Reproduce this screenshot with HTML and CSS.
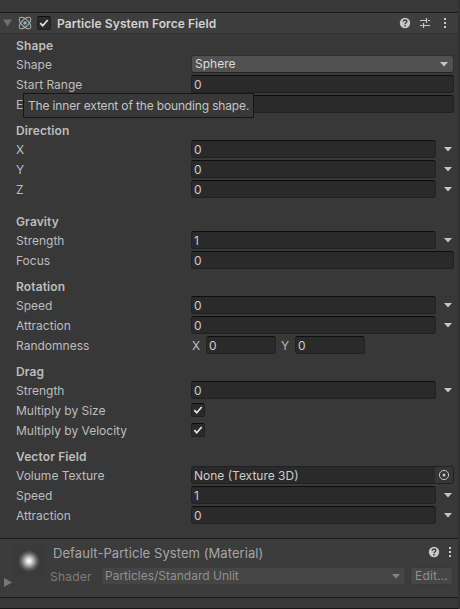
FILE: index.html
```html
<!DOCTYPE html>
<html lang="en">
<head>
<meta charset="utf-8">
<title>Inspector</title>
<link rel="stylesheet" href="styles.css">
</head>
<body>
<svg class="defs" width="0" height="0">
  <symbol id="check" viewBox="0 0 14 14"><path d="M3.3 7.2 5.7 9.7 10.7 4" fill="none" stroke="#e4e4e4" stroke-width="1.7"/></symbol>
  <symbol id="down" viewBox="0 0 8 5"><path d="M0 0H8L4 4.6Z" fill="currentColor"/></symbol>
  <symbol id="help" viewBox="0 0 12 12"><circle cx="6" cy="6" r="5.2" fill="#c8c8c8"/><path d="M4.2 4.7C4.2 2.4 7.8 2.4 7.8 4.6 7.8 5.8 6 5.7 6 7.2M6 8.1V9.5" fill="none" stroke="#3c3c3c" stroke-width="1.4"/></symbol>
  <symbol id="dots" viewBox="0 0 4 12"><path d="M1 1h2v2H1zM1 5h2v2H1zM1 9h2v2H1z" fill="#c8c8c8"/></symbol>
</svg>
<div class="inspector">
  <div class="top"></div>
  <header class="head">
    <svg class="fold" viewBox="0 0 10 8"><path d="M0 0H10L5 8Z" fill="#707070"/></svg>
    <svg class="atom" viewBox="0 0 14 14"><g fill="none" stroke="#b5b5b5" stroke-width="1"><ellipse cx="7" cy="7" rx="7.4" ry="3.5" transform="rotate(45 7 7)"/><ellipse cx="7" cy="7" rx="7.4" ry="3.5" transform="rotate(-45 7 7)"/></g><circle cx="7" cy="7" r="1.8" fill="#62c3ee"/></svg>
    <span class="check"><svg><use href="#check"/></svg></span>
    <h1>Particle System Force Field</h1>
    <svg class="help"><use href="#help"/></svg>
    <svg class="preset" viewBox="0 0 12 12"><path d="M1 3.5H7M9 3.5H11M7.5 1V6M1 8.5H3.5M5 8.5H11M4.5 6V11" fill="none" stroke="#c8c8c8" stroke-width="1.2"/></svg>
    <svg class="dots"><use href="#dots"/></svg>
  </header>
  <main class="body">
    <section>
      <h2>Shape</h2>
      <div class="row"><label>Shape</label><div class="select">Sphere<svg class="down"><use href="#down"/></svg></div></div>
      <div class="row"><label>Start Range</label><div class="field">0</div></div>
      <div class="row"><label>End Range</label><div class="field"></div><div class="tooltip">The inner extent of the bounding shape.</div></div>
    </section>
    <section>
      <h2>Direction</h2>
      <div class="row"><label>X</label><div class="field">0</div><svg class="down curve"><use href="#down"/></svg></div>
      <div class="row"><label>Y</label><div class="field">0</div><svg class="down curve"><use href="#down"/></svg></div>
      <div class="row"><label>Z</label><div class="field">0</div><svg class="down curve"><use href="#down"/></svg></div>
    </section>
    <section class="spaced">
      <h2>Gravity</h2>
      <div class="row"><label>Strength</label><div class="field">1</div><svg class="down curve"><use href="#down"/></svg></div>
      <div class="row"><label>Focus</label><div class="field">0</div></div>
    </section>
    <section>
      <h2>Rotation</h2>
      <div class="row"><label>Speed</label><div class="field">0</div><svg class="down curve"><use href="#down"/></svg></div>
      <div class="row"><label>Attraction</label><div class="field">0</div><svg class="down curve"><use href="#down"/></svg></div>
      <div class="row"><label>Randomness</label><span class="axis">X</span><div class="field small">0</div><span class="axis second">Y</span><div class="field small">0</div></div>
    </section>
    <section>
      <h2>Drag</h2>
      <div class="row"><label>Strength</label><div class="field">0</div><svg class="down curve"><use href="#down"/></svg></div>
      <div class="row"><label>Multiply by Size</label><span class="check"><svg><use href="#check"/></svg></span></div>
      <div class="row"><label>Multiply by Velocity</label><span class="check"><svg><use href="#check"/></svg></span></div>
    </section>
    <section>
      <h2>Vector Field</h2>
      <div class="row"><label>Volume Texture</label><div class="field object">None (Texture 3D)<span class="pick"><svg viewBox="0 0 12 12"><circle cx="6" cy="6" r="4.6" fill="none" stroke="#c4c4c4"/><circle cx="6" cy="6" r="1.5" fill="#c4c4c4"/></svg></span></div></div>
      <div class="row"><label>Speed</label><div class="field">1</div><svg class="down curve"><use href="#down"/></svg></div>
      <div class="row"><label>Attraction</label><div class="field">0</div><svg class="down curve"><use href="#down"/></svg></div>
    </section>
  </main>
  <footer class="material">
    <svg class="expand" viewBox="0 0 8 9"><path d="M0 0 8 4.5 0 9Z" fill="#777"/></svg>
    <div class="preview"></div>
    <div class="info">
      <div class="title"><h3>Default-Particle System (Material)</h3><svg class="help"><use href="#help"/></svg><svg class="dots"><use href="#dots"/></svg></div>
      <div class="shader"><span class="name">Shader</span><div class="select dim">Particles/Standard Unlit<svg class="down"><use href="#down"/></svg></div><div class="edit">Edit...</div></div>
    </div>
  </footer>
  <div class="bottom"></div>
</div>
</body>
</html>
```

FILE: styles.css
```css
* { box-sizing: border-box; }
body { margin: 0; background: #313131; }
.defs { position: absolute; }
svg { display: block; flex: none; }
h1, h2, h3 { margin: 0; }
.inspector {
  width: 458px;
  height: 609px;
  background: #383838;
  color: #bdbdbd;
  font: 12px/18px Inter, "Liberation Sans", sans-serif;
  white-space: nowrap;
  display: flex;
  flex-direction: column;
}
.top { height: 13px; border-bottom: 1px solid #1a1a1a; }
.head {
  height: 21px;
  background: #3e3e3e;
  border-bottom: 1px solid #303030;
  display: flex;
  align-items: center;
  padding-left: 3px;
}
.fold { width: 9px; height: 8px; }
.atom { width: 14px; height: 14px; margin: 0 5px 0 6px; overflow: visible; }
.head h1 { font-size: 12px; font-weight: 600; letter-spacing: 0.08px; color: #d2d2d2; margin: 2px 0 0 6px; flex: 1; }
.help { width: 12px; height: 12px; }
.preset { width: 12px; height: 12px; margin-left: 8px; }
.dots { width: 4px; height: 12px; }
.head .dots { margin: 0 11px 0 12px; }
.check {
  width: 14px;
  height: 14px;
  background: #2a2a2a;
  border: 1px solid #212121;
  border-top-color: #0d0d0d;
  border-radius: 2px;
}
.check svg { width: 14px; height: 14px; margin: -1px; }
.body { height: 504px; padding: 3px 4px 0 16px; }
section + section { margin-top: 9px; }
section.spaced { margin-top: 15px; }
h2 { font-size: 12px; line-height: 18px; font-weight: 600; letter-spacing: 0.12px; }
.row { display: flex; align-items: center; height: 18px; position: relative; }
.row + .row { margin-top: 2px; }
.row label { width: 175px; height: 18px; line-height: 20px; flex: none; }
.field {
  flex: 1;
  height: 18px;
  line-height: 17px;
  padding-left: 2px;
  background: #2a2a2a;
  border: 1px solid #212121;
  border-top-color: #0d0d0d;
  border-radius: 3px;
  color: #cdcdcd;
}
.select {
  flex: 1;
  height: 18px;
  line-height: 16px;
  padding: 0 5px 0 3px;
  background: #515151;
  border: 1px solid #303030;
  border-bottom-color: #242424;
  border-radius: 3px;
  color: #dcdcdc;
  display: flex;
  align-items: center;
  justify-content: space-between;
}
.down { width: 8px; height: 5px; color: #c4c4c4; }
.curve { margin: 0 2px 0 8px; }
.axis { width: 15px; height: 18px; line-height: 20px; padding-left: 1px; }
.axis.second { margin-left: 4px; }
.field.small { flex: none; width: 70px; }
.object { display: flex; justify-content: space-between; border-color: #212121; }
.pick { width: 18px; background: #363636; display: grid; place-items: center; border-radius: 0 2px 2px 0; }
.pick svg { width: 12px; height: 12px; }
.tooltip {
  position: absolute;
  left: 7px;
  top: -2px;
  width: 231px;
  height: 25px;
  padding-left: 4px;
  line-height: 24px;
  letter-spacing: -0.15px;
  border: 1px solid #161616;
  background: #383838;
  color: #c4c4c4;
}
.material {
  height: 60px;
  background: #3c3c3c;
  border-top: 1px solid #1a1a1a;
  border-bottom: 1px solid #1a1a1a;
  display: flex;
  padding-left: 4px;
}
.expand { width: 8px; height: 9px; margin-top: 39px; }
.preview {
  width: 32px;
  height: 32px;
  margin: 6px 5px 0 1px;
  background: radial-gradient(circle, #fff 0, #e8e8e8 2px, #a5a5a5 5px, #606060 8px, #3a3a3a 11px);
}
.info { flex: 1; padding: 4px 5px 0 0; }
.title { display: flex; align-items: center; height: 19px; }
.title h3 { font-size: 13px; font-weight: 400; letter-spacing: 0.07px; color: #a6a6a6; flex: 1; margin-left: 3px; }
.title .help { margin-top: -1px; }
.title .dots { margin: -1px 1px 0 8px; }
.shader { display: flex; height: 18px; margin-top: 5px; color: #7d7d7d; }
.name { width: 51px; line-height: 19px; letter-spacing: 0.2px; }
.select.dim { background: #454545; border-color: #3a3a3a; color: #909090; }
.select.dim .down { color: #858585; }
.edit {
  width: 43px;
  margin-left: 4px;
  text-align: center;
  line-height: 16px;
  letter-spacing: 0.15px;
  background: #464646;
  border: 1px solid #383838;
  border-radius: 3px;
  color: #909090;
}
.bottom { flex: 1; border-bottom: 1px solid #161616; }
```
